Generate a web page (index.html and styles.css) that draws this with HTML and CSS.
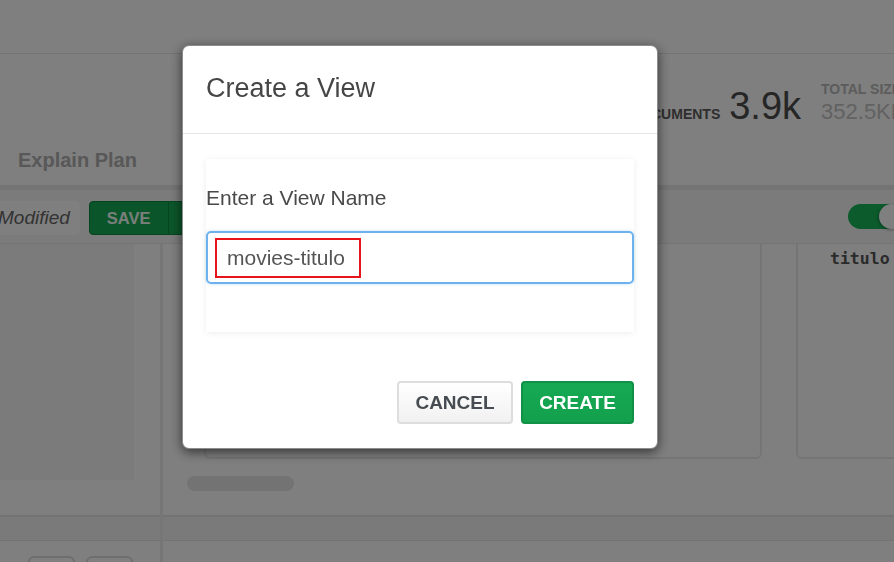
FILE: index.html
```html
<!DOCTYPE html>
<html>
<head>
<meta charset="utf-8">
<title>Create a View</title>
<link rel="stylesheet" href="styles.css">
</head>
<body>
<div class="app">
  <div class="topbar"></div>
  <div class="header">
    <div class="tabs"><span class="tab">Explain Plan</span></div>
    <div class="stats">
      <div class="stat-docs"><span class="stat-label">Documents</span><span class="stat-big">3.9k</span></div>
      <div class="stat-size"><span class="stat-label light">Total Size</span><span class="stat-mid">352.5KB</span></div>
    </div>
  </div>
  <div class="toolbar">
    <span class="pill">Modified</span>
    <div class="save"><span class="save-main">SAVE</span><span class="save-caret"></span></div>
    <div class="toggle"><span class="knob"></span></div>
  </div>
  <div class="workspace">
    <div class="sidebar">
      <div class="sb-main"><div class="sb-box"></div></div>
      <div class="band"></div>
      <div class="sb-foot"><span class="mini-btn"></span><span class="mini-btn"></span></div>
    </div>
    <div class="divider"></div>
    <div class="stage">
      <div class="stage-main">
        <div class="cards">
          <div class="card wide"></div>
          <div class="card narrow"><span class="field">titulo</span></div>
        </div>
        <div class="scrollbar"></div>
      </div>
      <div class="band"></div>
      <div class="stage-foot"></div>
    </div>
  </div>
</div>
<div class="overlay"></div>
<div class="modal">
  <div class="modal-header"><h4 class="modal-title">Create a View</h4></div>
  <div class="modal-body">
    <div class="panel">
      <div class="label">Enter a View Name</div>
      <div class="input"><span class="mark">movies-titulo</span></div>
    </div>
  </div>
  <div class="modal-footer">
    <button class="btn btn-cancel">CANCEL</button>
    <button class="btn btn-create">CREATE</button>
  </div>
</div>
</body>
</html>
```

FILE: styles.css
```css
* { box-sizing: border-box; }
html, body { margin: 0; padding: 0; }
body {
  width: 894px;
  height: 562px;
  overflow: hidden;
  font-family: "Liberation Sans", Arial, sans-serif;
  background: #fff;
}
.app { width: 894px; height: 562px; display: flex; flex-direction: column; overflow: hidden; }

.topbar { height: 54px; background: #fefefe; border-bottom: 1px solid #e6e6e6; flex: none; }

.header {
  height: 136px;
  flex: none;
  display: flex;
  background: #fefefe;
  border-bottom: 5px solid #e8e8e8;
}
.tabs {
  width: 630px;
  flex: none;
  display: flex;
  align-items: flex-end;
  padding: 0 0 13px 18px;
}
.tab { font-size: 20px; font-weight: bold; color: #b0b0b0; line-height: 24px; }
.stats { display: flex; align-items: flex-start; padding-top: 33px; white-space: nowrap; }
.stat-docs { display: flex; align-items: baseline; gap: 9px; }
.stat-label { font-size: 14px; font-weight: bold; text-transform: uppercase; color: #5c5c5c; line-height: 16px; }
.stat-label.light { color: #b8b8b8; }
.stat-big { font-size: 38px; line-height: 38px; color: #4c4c4c; }
.stat-size { display: flex; flex-direction: column; gap: 2px; margin-left: 20px; margin-top: -6px; }
.stat-mid { font-size: 22px; line-height: 26px; color: #c4c4c4; }

.toolbar {
  height: 54px;
  flex: none;
  display: flex;
  align-items: flex-start;
  padding-top: 11px;
  background: #f6f6f6;
  border-bottom: 1px solid #eaeaea;
}
.pill {
  margin-left: -10px;
  height: 34px;
  padding: 0 10px 0 8px;
  display: flex;
  align-items: center;
  background: #ffffff;
  border-radius: 5px;
  font-size: 19px;
  font-style: italic;
  color: #666;
}
.save {
  margin-left: 9px;
  height: 34px;
  display: flex;
  background: #17ab55;
  border: 1px solid #0f8a43;
  border-radius: 4px;
}
.save-main {
  width: 79px;
  display: flex;
  align-items: center;
  padding-left: 17px;
  font-size: 16.5px;
  font-weight: bold;
  color: #f2fff6;
  border-right: 1px solid #0f8a43;
}
.save-caret { width: 26px; }
.toggle {
  margin-left: auto;
  margin-right: -10px;
  margin-top: 3px;
  width: 56px;
  height: 25px;
  border-radius: 13px;
  background: #17b658;
  display: flex;
  justify-content: flex-end;
}
.knob {
  width: 25px;
  height: 25px;
  border-radius: 50%;
  background: #fff;
  box-shadow: -1px 1px 3px rgba(0,0,0,0.3);
}

.workspace { flex: 1; display: flex; min-height: 0; }
.sidebar { width: 160px; flex: none; display: flex; flex-direction: column; }
.sb-main { height: 271px; flex: none; }
.sb-box { width: 134px; height: 236px; background: #f6f6f6; }
.band {
  height: 26px;
  flex: none;
  background: #f4f4f4;
  border-top: 2px solid #e6e6e6;
  border-bottom: 1px solid #e6e6e6;
}
.sb-foot { flex: 1; display: flex; gap: 11px; padding: 15px 0 0 28px; }
.mini-btn {
  width: 47px;
  height: 20px;
  border: 2px solid #dcdcdc;
  border-radius: 6px;
}
.divider { width: 3px; flex: none; background: #ececec; }
.stage { flex: 1; display: flex; flex-direction: column; min-width: 0; }
.stage-main { height: 271px; flex: none; }
.cards { display: flex; gap: 34px; padding-left: 41px; height: 215px; }
.card {
  flex: none;
  height: 215px;
  background: #fff;
  border: 2px solid #ebebeb;
  border-top: none;
  border-radius: 0 0 6px 6px;
}
.card.wide { width: 558px; }
.card.narrow { width: 140px; padding: 5px 0 0 32px; }
.field {
  font-family: "DejaVu Sans Mono", "Liberation Mono", monospace;
  font-weight: bold;
  font-size: 16.5px;
  line-height: 20px;
  color: #555;
}
.scrollbar {
  margin: 17px 0 0 24px;
  width: 107px;
  height: 15px;
  border-radius: 8px;
  background: #e6e6e6;
}
.stage-foot { flex: 1; }

.overlay { position: fixed; inset: 0; background: rgba(0,0,0,0.5); }

.modal {
  position: fixed;
  left: 182px;
  top: 45px;
  width: 476px;
  height: 404px;
  background: #fff;
  border: 1px solid rgba(0,0,0,0.45);
  border-radius: 7px;
  box-shadow: 0 3px 12px rgba(0,0,0,0.6);
  display: flex;
  flex-direction: column;
}
.modal-header {
  height: 88px;
  flex: none;
  border-bottom: 1px solid #e5e5e5;
  padding: 29px 0 0 23px;
}
.modal-title {
  margin: 0;
  font-size: 27px;
  font-weight: normal;
  line-height: 27px;
  color: #464646;
}
.modal-body { padding: 25px 23px 0; }
.panel {
  background: #fff;
  box-shadow: 0 1px 7px rgba(0,0,0,0.07);
  padding: 27px 0 48px;
}
.label { font-size: 21px; line-height: 24px; color: #494949; }
.input {
  margin-top: 21px;
  height: 53px;
  border: 2px solid #6db2ec;
  border-radius: 5px;
  box-shadow: 0 0 3px rgba(102,175,233,0.45);
  display: flex;
  align-items: center;
  padding-left: 7px;
}
.mark {
  height: 40px;
  display: flex;
  align-items: center;
  padding: 0 14px 0 10px;
  border: 2px solid #e8141b;
  font-size: 21px;
  color: #555;
}
.modal-footer {
  display: flex;
  justify-content: flex-end;
  gap: 8px;
  padding: 49px 23px 0;
}
.btn {
  height: 43px;
  border-radius: 4px;
  font-family: "Liberation Sans", Arial, sans-serif;
  font-size: 19px;
  font-weight: bold;
  cursor: pointer;
}
.btn-cancel {
  width: 116px;
  background: linear-gradient(#ffffff, #f1f1f1);
  border: 2px solid #dddddd;
  color: #464c51;
}
.btn-create {
  width: 113px;
  background: linear-gradient(#16a954, #13a04d);
  border: 2px solid #109145;
  color: #fff;
}
```
